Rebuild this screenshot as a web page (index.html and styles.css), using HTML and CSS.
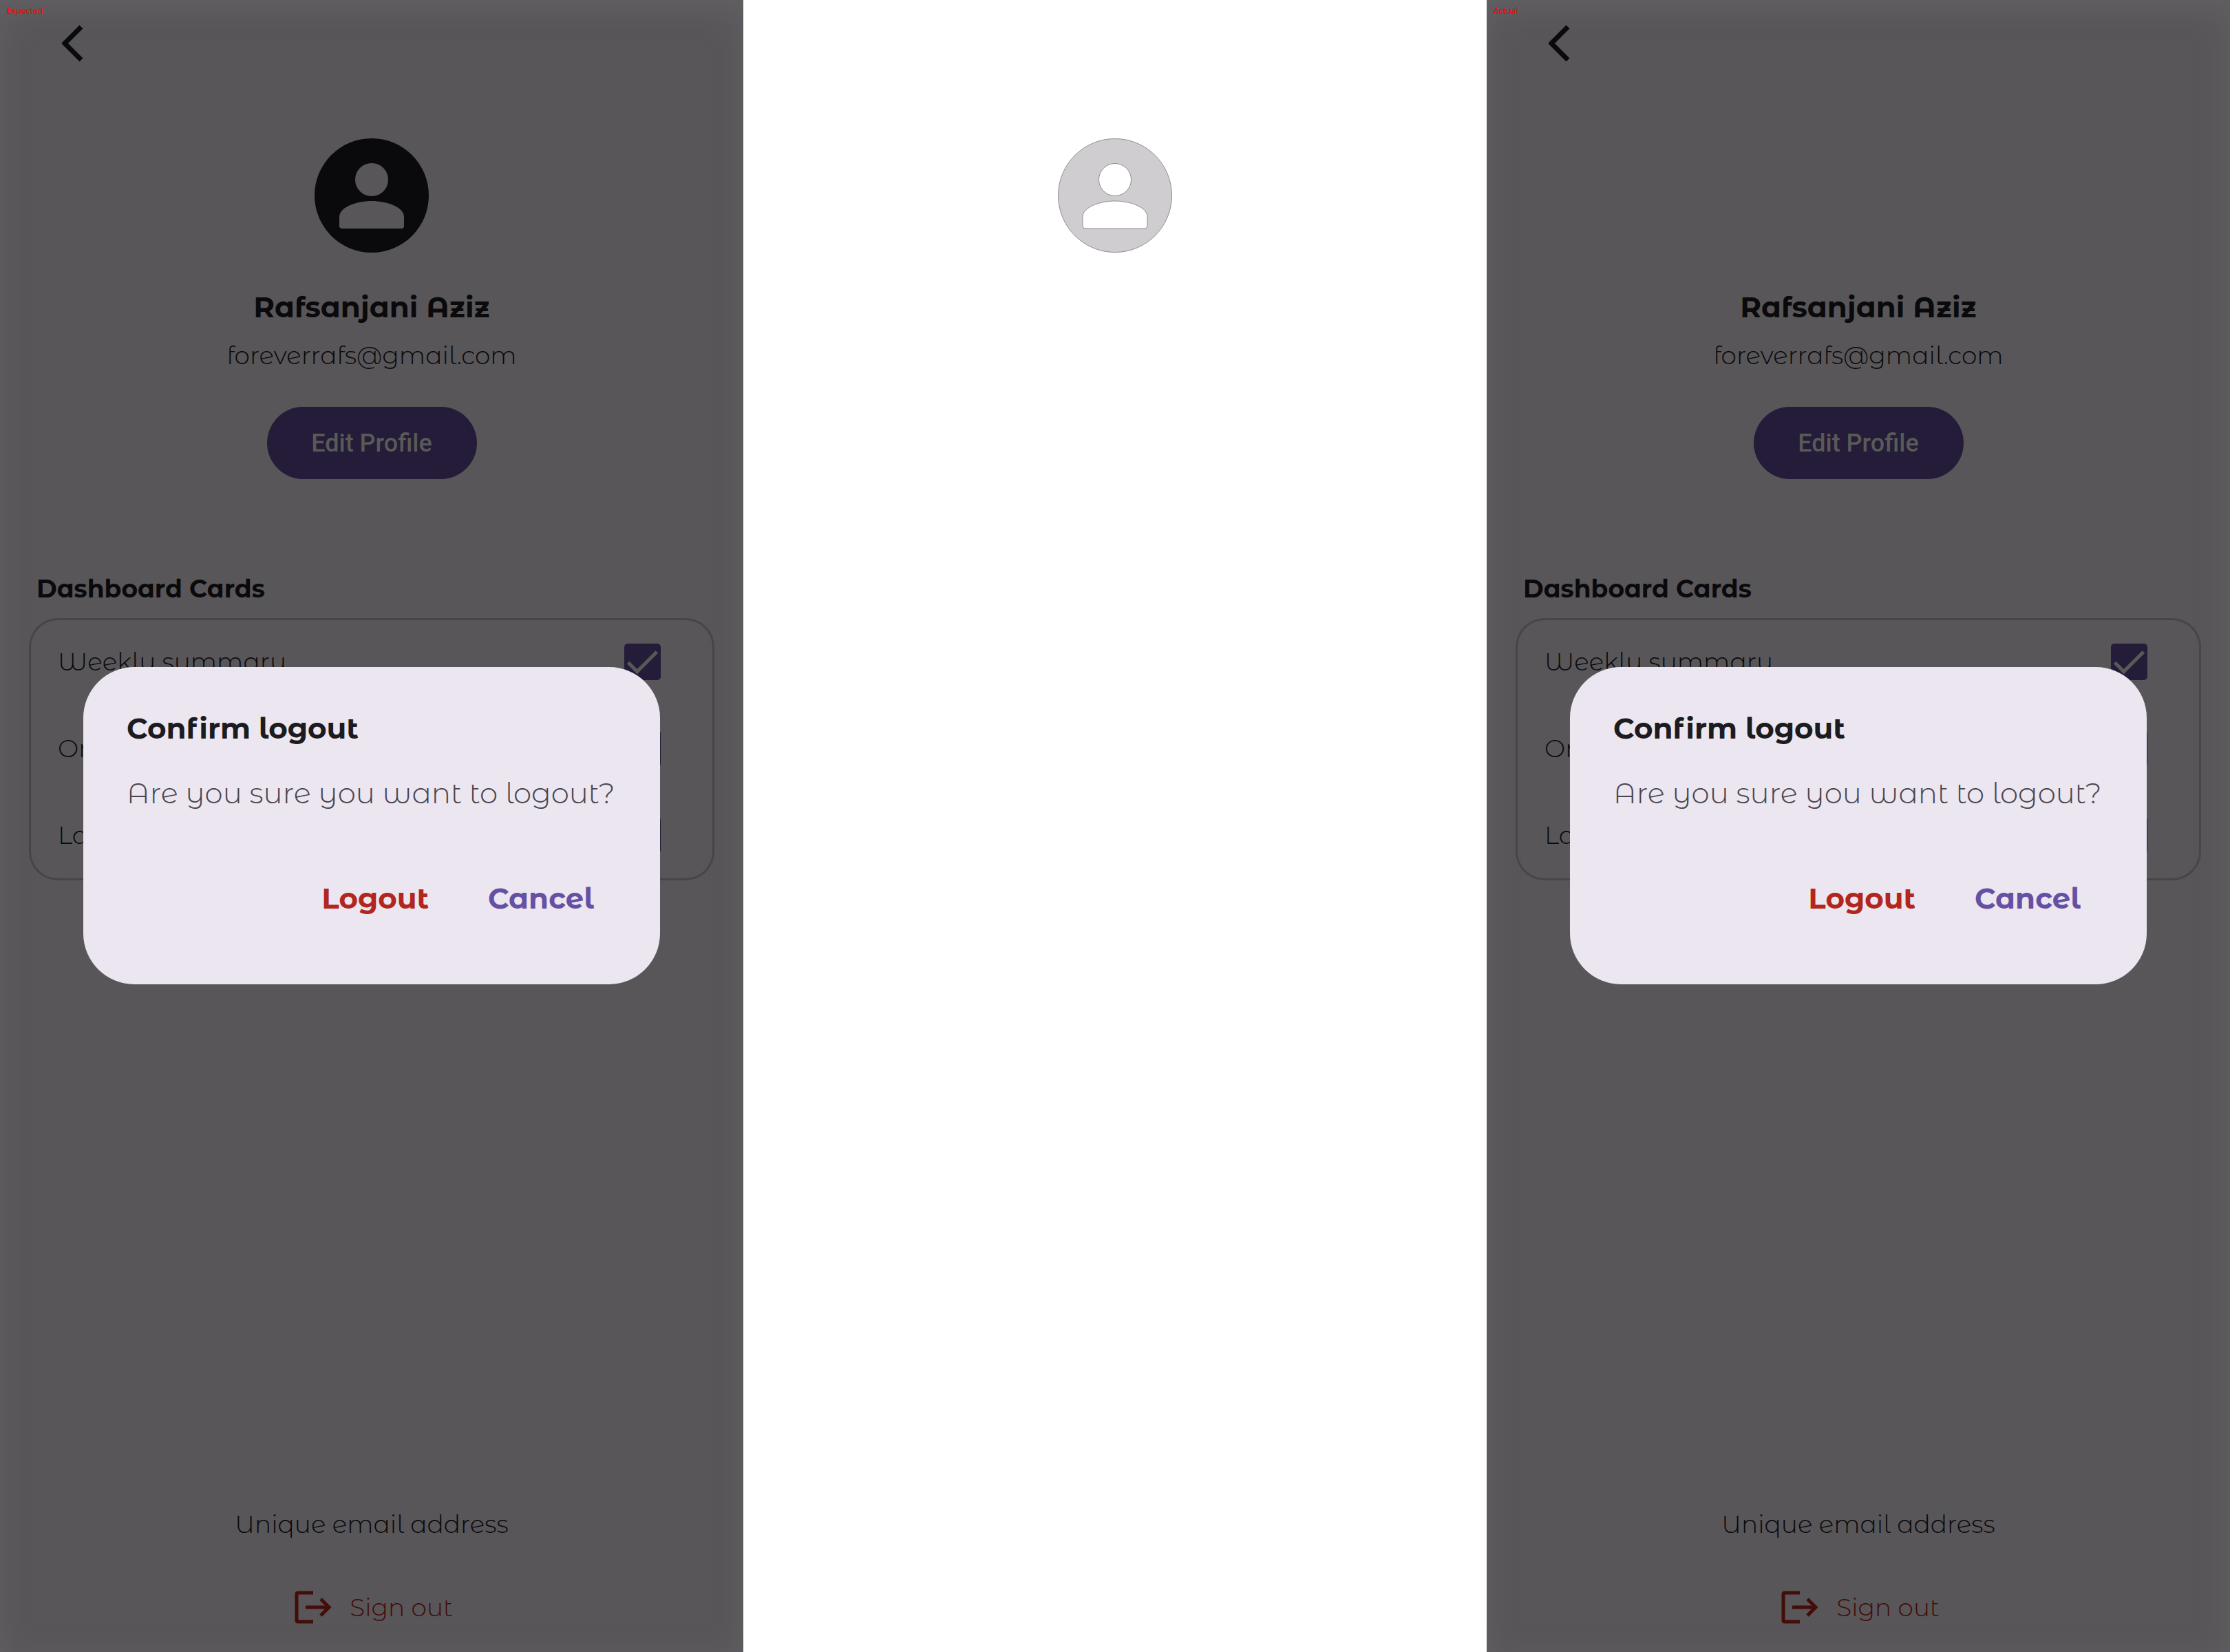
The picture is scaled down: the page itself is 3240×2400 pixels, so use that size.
FILE: index.html
```
<!DOCTYPE html>
<html lang="en">
<head>
<meta charset="utf-8">
<title>Profile screen comparison</title>
<link rel="stylesheet" href="styles.css">
</head>
<body>
<main class="compare">
  <section class="screen">
    <span class="tag">Expected</span>
    <header class="topbar">
      <button class="back" aria-label="Back"><svg viewBox="0 0 32 54" width="32" height="54"><path d="M28 3 4 27l24 24" fill="none" stroke="currentColor" stroke-width="7"/></svg></button>
    </header>
    <div class="profile">
      <svg class="avatar" viewBox="0 0 166 166"><circle cx="83" cy="83" r="83" fill="#0a0a0c"/><circle cx="83" cy="60" r="24" fill="#585659"/><path d="M36 114c0-14 25-23 47-23s47 9 47 23v13q0 4-4 4H40q-4 0-4-4z" fill="#585659"/></svg>
      <h1 class="name">Rafsanjani Aziz</h1>
      <p class="email">foreverrafs@gmail.com</p>
      <button class="edit">Edit Profile</button>
    </div>
    <h2 class="heading">Dashboard Cards</h2>
    <div class="cards">
      <label class="row">Weekly summary <input class="check" type="checkbox" checked></label>
      <label class="row">On <input class="check" type="checkbox" checked></label>
      <label class="row">La <input class="check" type="checkbox" checked></label>
    </div>
    <footer class="foot">
      <p class="unique">Unique email address</p>
      <button class="signout"><svg viewBox="0 0 54 48" width="54" height="48"><path d="M27 3H5q-2 0-2 2v38q0 2 2 2h22M16 24h34M38 12l12 12-12 12" fill="none" stroke="currentColor" stroke-width="5"/></svg>Sign out</button>
    </footer>
    <div class="overlay">
      <div class="dialog" role="dialog" aria-label="Confirm logout">
        <h2 class="title">Confirm logout</h2>
        <p class="message">Are you sure you want to logout?</p>
        <div class="actions"><button class="action danger">Logout</button><button class="action">Cancel</button></div>
      </div>
    </div>
  </section>

  <section class="screen diff">
    <div class="topbar"></div>
    <div class="profile">
      <svg class="avatar" viewBox="0 0 166 166"><g stroke="#8f8e8f" stroke-width="1"><circle cx="83" cy="83" r="82.5" fill="#cfcdcf"/><circle cx="83" cy="60" r="23.5" fill="#fff"/><path d="M36 114c0-14 25-23 47-23s47 9 47 23v13q0 4-4 4H40q-4 0-4-4z" fill="#fff"/></g></svg>
    </div>
  </section>

  <section class="screen">
    <span class="tag">Actual</span>
    <header class="topbar">
      <button class="back" aria-label="Back"><svg viewBox="0 0 32 54" width="32" height="54"><path d="M28 3 4 27l24 24" fill="none" stroke="currentColor" stroke-width="7"/></svg></button>
    </header>
    <div class="profile">
      <div class="avatar"></div>
      <h1 class="name">Rafsanjani Aziz</h1>
      <p class="email">foreverrafs@gmail.com</p>
      <button class="edit">Edit Profile</button>
    </div>
    <h2 class="heading">Dashboard Cards</h2>
    <div class="cards">
      <label class="row">Weekly summary <input class="check" type="checkbox" checked></label>
      <label class="row">On <input class="check" type="checkbox" checked></label>
      <label class="row">La <input class="check" type="checkbox" checked></label>
    </div>
    <footer class="foot">
      <p class="unique">Unique email address</p>
      <button class="signout"><svg viewBox="0 0 54 48" width="54" height="48"><path d="M27 3H5q-2 0-2 2v38q0 2 2 2h22M16 24h34M38 12l12 12-12 12" fill="none" stroke="currentColor" stroke-width="5"/></svg>Sign out</button>
    </footer>
    <div class="overlay">
      <div class="dialog" role="dialog" aria-label="Confirm logout">
        <h2 class="title">Confirm logout</h2>
        <p class="message">Are you sure you want to logout?</p>
        <div class="actions"><button class="action danger">Logout</button><button class="action">Cancel</button></div>
      </div>
    </div>
  </section>
</main>
</body>
</html>
```
FILE: styles.css
```
* { box-sizing: border-box; }
body { margin: 0; background: #fff; color: #0a0a0c; font-family: "Montserrat Alternates", Montserrat, Inter, sans-serif; font-size: 36px; line-height: 48px; font-weight: 300; }
h1, h2, p { margin: 0; }
button { border: 0; padding: 0; background: none; color: inherit; font: inherit; }
.compare { display: grid; grid-template-columns: repeat(3, 1fr); min-height: 100vh; }
.screen { position: relative; display: flex; flex-direction: column; padding: 0 42px; background: #585659; box-shadow: inset 0 14px 44px #626063; }
.diff { background: #fff; box-shadow: none; }
.tag { position: absolute; top: 6px; left: 10px; color: #f00; font: 500 12px/20px "Noto Sans", sans-serif; }
.topbar { height: 126px; padding: 36px 0 0 48px; }
.back { display: block; height: 54px; }
.back svg { display: block; }
.profile { display: flex; flex-direction: column; align-items: center; padding-top: 75px; }
.avatar { width: 166px; height: 166px; }
.name { margin-top: 53px; font-size: 42px; line-height: 52px; font-weight: 700; }
.email { margin-top: 20px; }
.edit { margin-top: 51px; width: 305px; height: 105px; border-radius: 53px; background: #241c38; color: #595958; font: 500 36px/48px Roboto, sans-serif; }
.heading { margin: 135px 0 19px 11px; font-size: 36px; line-height: 48px; font-weight: 700; }
.cards { padding-bottom: 3px; border-radius: 42px; box-shadow: inset 0 0 0 3px #474548; }
.row { display: flex; align-items: center; justify-content: space-between; height: 126px; padding: 0 78px 0 42px; }
.check { appearance: none; width: 53px; height: 53px; margin: 0; border-radius: 5px; background: #241c38; display: grid; place-items: center; }
.check::before { content: ""; width: 38px; height: 16px; border: solid #595958; border-width: 0 0 5px 5px; transform: translateY(-5px) rotate(-45deg); }
.foot { margin-top: auto; padding-bottom: 41px; display: flex; flex-direction: column; align-items: center; }
.signout { display: flex; align-items: center; gap: 26px; margin-top: 73px; padding-left: 6px; color: #430d09; }
.overlay { position: absolute; inset: 0; padding-bottom: 2px; display: grid; place-items: center; }
.dialog { width: 838px; padding: 63px; border-radius: 74px; background: #ebe6ef; font-size: 42px; line-height: 52px; }
.title { color: #1c1b1f; font-size: 42px; line-height: 52px; font-weight: 700; }
.message { margin-top: 42px; color: #49454f; white-space: nowrap; }
.actions { display: flex; justify-content: flex-end; gap: 86px; margin: 101px 33px 36px 0; font-weight: 700; color: #6650a4; }
.danger { color: #b3261e; }
```
